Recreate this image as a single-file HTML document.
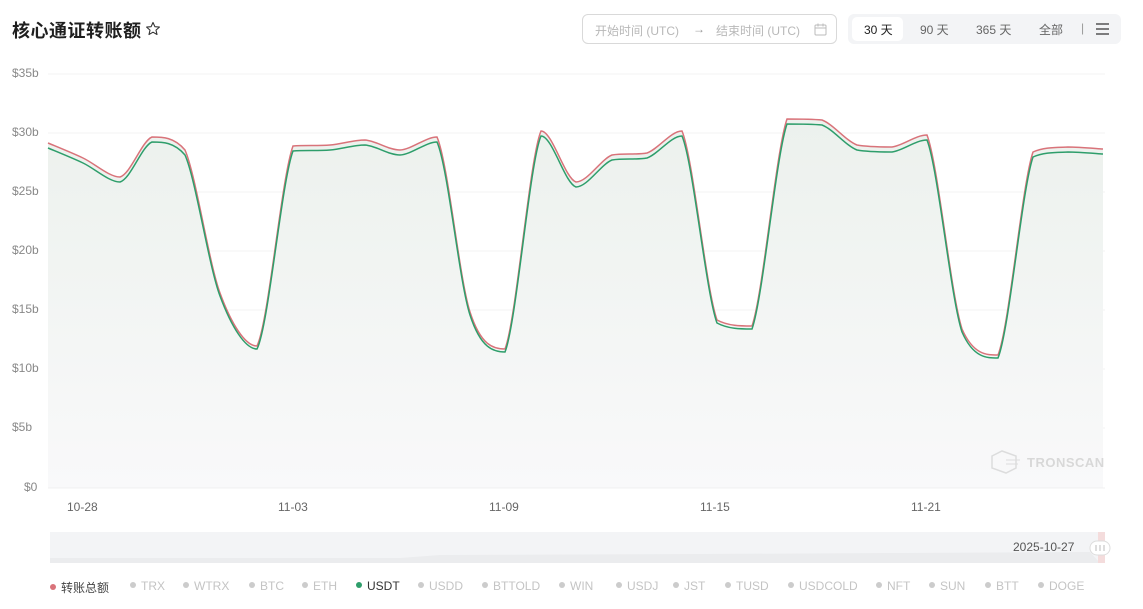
<!DOCTYPE html>
<html><head><meta charset="utf-8"><style>
*{margin:0;padding:0;box-sizing:border-box}
body{width:1143px;height:609px;background:#fff;font-family:"Liberation Sans","Noto Sans CJK SC",sans-serif;position:relative;overflow:hidden;color:#333}
.t{position:absolute;left:12px;top:17px;font-size:18px;font-weight:bold;color:#1f1f1f;letter-spacing:0.5px}
.dp{position:absolute;left:582px;top:14px;width:255px;height:30px;border:1px solid #d9d9d9;border-radius:6px;font-size:12px;color:#b8b8b8;}
.dp span{position:absolute;top:7px}
.seg{position:absolute;left:848px;top:14px;width:273px;height:30px;background:#f3f4f6;border-radius:6px;font-size:12px;color:#666}
.seg span{position:absolute;top:7px}
.act{position:absolute;left:4px;top:3px;width:51px;height:24px;background:#fff;border-radius:5px}
.yl{position:absolute;left:12px;font-size:12px;color:#888}
.xl{position:absolute;top:500px;font-size:12px;color:#666}
.lg{position:absolute;top:579px;font-size:12px;color:#c4c4c4;white-space:nowrap}
.lg i{display:inline-block;width:6px;height:6px;border-radius:50%;background:#ccc;margin-right:5px;vertical-align:2px}
</style></head><body>
<div class="t">核心通证转账额</div>
<svg style="position:absolute;left:145px;top:21px" width="16" height="16" viewBox="0 0 16 16"><path d="M8 1.5l1.9 4.2 4.5.4-3.4 3 1 4.4L8 11.2 4 13.5l1-4.4-3.4-3 4.5-.4z" fill="none" stroke="#333" stroke-width="1.1" stroke-linejoin="round"/></svg>
<div class="dp"><span style="left:12px">开始时间 (UTC)</span><span style="left:110px;color:#999">→</span><span style="left:133px">结束时间 (UTC)</span>
<svg style="position:absolute;left:231px;top:8px" width="13" height="13" viewBox="0 0 13 13"><rect x="1" y="2" width="11" height="10" rx="1" fill="none" stroke="#bbb"/><path d="M1 5h11M4 0.5v3M9 0.5v3" stroke="#bbb"/></svg></div>
<div class="seg"><div class="act"></div><span style="left:16px;color:#222">30 天</span><span style="left:72px">90 天</span><span style="left:128px">365 天</span><span style="left:191px">全部</span><span style="left:233px;color:#999">|</span>
<svg style="position:absolute;left:248px;top:9px" width="13" height="12"><path d="M0 1h13M0 6h13M0 11h13" stroke="#555" stroke-width="1.5"/></svg></div>
<div class="yl" style="top:66px">$35b</div><div class="yl" style="top:125px">$30b</div><div class="yl" style="top:184px">$25b</div><div class="yl" style="top:243px">$20b</div><div class="yl" style="top:302px">$15b</div><div class="yl" style="top:361px">$10b</div><div class="yl" style="top:420px">$5b</div><div class="yl" style="top:480px;left:24px">$0</div>
<svg id="ch" style="position:absolute;left:0;top:0" width="1143" height="609">
<defs><linearGradient id="g" x1="0" y1="0" x2="0" y2="1"><stop offset="0" stop-color="#ecf1ed"/><stop offset="1" stop-color="#f9f9fa"/></linearGradient></defs>
<g stroke="#f3f3f3" stroke-width="1"><path d="M48 74H1105M48 133H1105M48 192H1105M48 251H1105M48 310H1105M48 369H1105M48 428H1105"/></g>
<path id="area" fill="url(#g)"/>
<path d="M48 488H1105" stroke="#f0f0f0"/>
<path id="red" fill="none" stroke="#d9737a" stroke-width="1.5"/>
<path id="grn" fill="none" stroke="#2e9e6b" stroke-width="1.5"/>
<rect x="50" y="532" width="1055" height="31" fill="#f3f4f6"/>
<path d="M50 558 L400 558 L440 555 L700 554 L900 553 L1090 552 L1100 563 L50 563Z" fill="#ebecee"/>
<rect x="1098" y="532" width="7" height="31" fill="#f4dcdc"/>
<rect x="1090" y="541" width="20" height="14" rx="7" fill="#fff" stroke="#ddd"/>
<path d="M1096 545v6M1100 545v6M1104 545v6" stroke="#bbb"/>
<g opacity="0.35"><path d="M992 456l10-5 14 5v12l-10 5-14-5z" fill="none" stroke="#aaa" stroke-width="1.5"/><path d="M1006 460h14M1006 464h12" stroke="#aaa"/></g>
</svg>
<div style="position:absolute;left:1027px;top:455px;font-size:13px;font-weight:bold;color:#d8d8d8;letter-spacing:0.5px">TRONSCAN</div>
<div class="xl" style="left:67px">10-28</div><div class="xl" style="left:278px">11-03</div><div class="xl" style="left:489px">11-09</div><div class="xl" style="left:700px">11-15</div><div class="xl" style="left:911px">11-21</div>
<div style="position:absolute;left:1013px;top:540px;font-size:12px;color:#555">2025-10-27</div>
<div class="lg" style="left:50px;color:#444"><i style="background:#d9737a"></i>转账总额</div>
<div class="lg" style="left:130px"><i></i>TRX</div>
<div class="lg" style="left:183px"><i></i>WTRX</div>
<div class="lg" style="left:249px"><i></i>BTC</div>
<div class="lg" style="left:302px"><i></i>ETH</div>
<div class="lg" style="left:356px;color:#333"><i style="background:#2e9e6b"></i>USDT</div>
<div class="lg" style="left:418px"><i></i>USDD</div>
<div class="lg" style="left:482px"><i></i>BTTOLD</div>
<div class="lg" style="left:559px"><i></i>WIN</div>
<div class="lg" style="left:616px"><i></i>USDJ</div>
<div class="lg" style="left:673px"><i></i>JST</div>
<div class="lg" style="left:725px"><i></i>TUSD</div>
<div class="lg" style="left:788px"><i></i>USDCOLD</div>
<div class="lg" style="left:876px"><i></i>NFT</div>
<div class="lg" style="left:929px"><i></i>SUN</div>
<div class="lg" style="left:985px"><i></i>BTT</div>
<div class="lg" style="left:1038px"><i></i>DOGE</div>
<script>
var P=[[48,148],[83,163],[120,182],[152,142],[185,155],[220,296],[257,349],[293,151],[330,150],[365,145],[400,155],[437,142],[470,315],[505,352],[541,136],[576,187],[612,160],[647,158],[682,136],[717,323],[752,329],[787,124],[822,125],[857,150],[892,152],[927,140],[962,332],[998,358],[1033,157],[1068,152],[1103,154]];
function path(pts){var d="M"+pts[0][0]+" "+pts[0][1];for(var i=0;i<pts.length-1;i++){var p0=pts[i-1]||pts[i],p1=pts[i],p2=pts[i+1],p3=pts[i+2]||p2;var t=0.16;
var c1x=p1[0]+(p2[0]-p0[0])*t,c1y=p1[1]+(p2[1]-p0[1])*t,c2x=p2[0]-(p3[0]-p1[0])*t,c2y=p2[1]-(p3[1]-p1[1])*t;
c1y=Math.max(Math.min(c1y,Math.max(p1[1],p2[1])),Math.min(p1[1],p2[1]));c2y=Math.max(Math.min(c2y,Math.max(p1[1],p2[1])),Math.min(p1[1],p2[1]));
d+=" C"+c1x.toFixed(1)+" "+c1y.toFixed(1)+" "+c2x.toFixed(1)+" "+c2y.toFixed(1)+" "+p2[0]+" "+p2[1];}return d;}
var g=path(P);var R=P.map(function(p){return [p[0],p[1]-(p[1]>250?3:5)];});
document.getElementById('grn').setAttribute('d',g);
document.getElementById('red').setAttribute('d',path(R));
document.getElementById('area').setAttribute('d',path(R)+" L1103 488 L48 488Z");
</script>
</body></html>
